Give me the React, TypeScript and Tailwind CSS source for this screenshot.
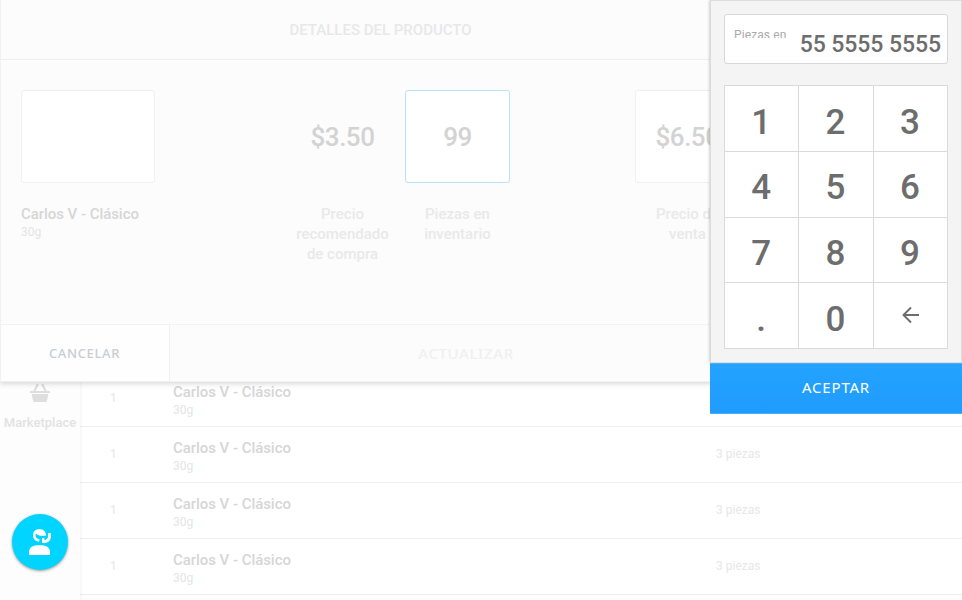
import React from 'react';

const rows = [
  { qty: '1', name: 'Carlos V - Clásico', size: '30g', stock: '3 piezas' },
  { qty: '1', name: 'Carlos V - Clásico', size: '30g', stock: '3 piezas' },
  { qty: '1', name: 'Carlos V - Clásico', size: '30g', stock: '3 piezas' },
  { qty: '1', name: 'Carlos V - Clásico', size: '30g', stock: '3 piezas' },
];

const keys = ['1', '2', '3', '4', '5', '6', '7', '8', '9', '.', '0', 'back'];

function Product({ name, size }: { name: string; size: string }) {
  return (
    <div className="whitespace-nowrap">
      <div className="text-[15px] leading-5 font-medium tracking-[-0.05px] text-[#d6d6d6]">{name}</div>
      <div className="text-xs leading-4 text-[#e4e4e4]">{size}</div>
    </div>
  );
}

function Sidebar() {
  return (
    <aside className="z-10 flex h-[600px] w-20 shrink-0 flex-col items-center bg-[#fdfdfd] pt-[384px] shadow-[0_0_4px_rgba(0,0,0,0.08)]">
      <svg width="20" height="19" viewBox="0 0 20 19" className="shrink-0">
        <path d="M4 8 7.800 0M16 8 12.200 0" stroke="#dedede" strokeWidth="2.2" fill="none" />
        <path d="M0 7h20v2H0z" fill="#dedede" />
        <path d="M1.600 10h16.800l-1.500 7q-.3 1-1.300 1H4.400q-1 0-1.300-1z" fill="#dedede" />
      </svg>
      <div className="mt-[10px] text-[13px] leading-5 font-medium tracking-[0.01px] text-[#e2e2e2]">Marketplace</div>
      <button className="mt-[81px] flex size-14 shrink-0 items-center justify-center rounded-full bg-[#00d4ff] shadow-[0_1px_3px_rgba(0,0,0,0.4)]">
        <svg width="24" height="28" viewBox="0 0 24 28">
          <path d="M1 27v-3C1 19 5 17.200 11.500 17.200S22 19 22 24v3z" fill="#fff" />
          <path d="M11.500 1C7.500 1 5 4 5 7.300c0 3.700 2.400 6.300 6.300 6.300v-2.600C9 10.800 7.500 9.300 7.500 7.400q0-1 .5-1.600C11 8 14.500 8.400 18.200 7.600 18 3.800 15.300 1 11.500 1z" fill="#fff" />
          <path d="M20.200 5H23v3c0 4.400-3 7-6.500 7H14v-4.800h2.400v2.200c2.400-.7 3.800-2.400 3.800-4.800z" fill="#fff" />
        </svg>
      </button>
    </aside>
  );
}

function Metric({ value, label, box }: { value: string; label: string; box: string }) {
  return (
    <div className="flex flex-col items-center">
      <div className={`flex h-[93px] items-center justify-center rounded-[3px] border pt-[2px] text-[26px] font-medium tracking-[-0.5px] text-[#d3d3d3] ${box}`}>{value}</div>
      <div className="mt-[21px] text-center text-[15px] leading-5 font-medium whitespace-pre-line text-[#e9e9e9]">{label}</div>
    </div>
  );
}

function ProductDialog() {
  return (
    <section className="absolute top-0 left-0 z-20 flex h-[382px] w-[763px] flex-col border-l border-[#f1f1f1] bg-[#fcfcfc] shadow-[0_2px_5px_rgba(0,0,0,0.15)]">
      <header className="flex h-[60px] shrink-0 items-center justify-center border-b border-[#efefef] pt-[2px] pr-[3px] text-[15px] font-medium text-[#e8e8e8]">
        DETALLES DEL PRODUCTO
      </header>
      <div className="flex h-[264px] shrink-0 items-start pt-[30px] pl-5">
        <div className="w-[264px]">
          <div className="mb-[21px] h-[93px] w-[134px] rounded-[3px] border border-[#f0f0f0] bg-white" />
          <Product name="Carlos V - Clásico" size="30g" />
        </div>
        <Metric value="$3.50" label={'Precio\nrecomendado\nde compra'} box="w-[115px] border-transparent" />
        <div className="ml-[5px]">
          <Metric value="99" label={'Piezas en\ninventario'} box="w-[105px] border-[#b9e0fc] bg-white" />
        </div>
        <div className="ml-[125px]">
          <Metric value="$6.50" label={'Precio de\nventa'} box="w-[105px] border-[#f0f0f0] bg-white" />
        </div>
      </div>
      <footer className="flex h-[58px] border-t border-[#f2f2f2] font-['Noto_Sans',sans-serif]">
        <button className="w-[169px] border-r border-b border-[#f0f0f0] bg-[#fefefe] pt-px pr-px text-[13px] font-medium tracking-[0.65px] text-[#c9cdd2]">CANCELAR</button>
        <button className="flex-1 border-b border-[#f2f2f2] pr-px text-[15px] font-medium tracking-[0.6px] text-[#f0f0f0]">ACTUALIZAR</button>
      </footer>
    </section>
  );
}

function Keypad() {
  return (
    <section className="absolute top-0 left-[710px] z-30 w-[252px] bg-[#f4f4f4]">
      <div className="h-[363px] border border-[#dcdcdc] px-[13px] pt-[13px] shadow-[0_0_3px_rgba(0,0,0,0.3)]">
        <div className="flex h-[50px] items-start justify-between rounded-[3px] border border-[#d8d8d8] bg-white pr-[6px] pl-[9px]">
          <div className="mt-[14px] h-[9px] overflow-hidden text-xs leading-[13px] tracking-[0.1px] text-[#aaa]">Piezas en</div>
          <div className="mt-[16px] text-[23px] leading-7 font-medium tracking-[-0.07px] whitespace-nowrap text-[#6d6d6d]">55 5555 5555</div>
        </div>
        <div className="mt-[21px] grid h-[264px] grid-cols-3 grid-rows-4 gap-px border border-[#dadada] bg-[#dadada]">
          {keys.map((key) => (
            <button key={key} className="flex items-center justify-center bg-white pt-[9px] pr-px text-[35px] font-medium text-[#6d6d6d]">
              {key === 'back' ? (
                <svg width="18" height="18" viewBox="0 0 18 18" className="mb-[10px] ml-[3px]" fill="none" stroke="#6d6d6d" strokeWidth="1.9">
                  <path d="M17 9H2M9 1.500 1.500 9 9 16.500" />
                </svg>
              ) : key}
            </button>
          ))}
        </div>
      </div>
      <button className="relative block h-[51px] w-full border-y border-[#48b0ff] bg-linear-to-b from-[#23a3ff] to-[#209bff] pb-[2px] font-['Noto_Sans',sans-serif] text-[15px] tracking-[0.8px] text-white">
        ACEPTAR
      </button>
    </section>
  );
}

export default function App() {
  return (
    <div className="relative flex h-[600px] w-[962px] overflow-hidden bg-white font-[Roboto,sans-serif]">
      <Sidebar />
      <main className="flex-1 pt-[371px]">
        {rows.map((row, index) => (
          <div key={index} className="flex h-14 items-center border-b border-[#eee]">
            <div className="w-[93px] pb-[2px] pl-[30px] text-xs text-[#e7e7e7]">{row.qty}</div>
            <div className="w-[543px] pt-[2px]"><Product name={row.name} size={row.size} /></div>
            <div className="pb-[2px] text-xs text-[#e7e7e7]">{row.stock}</div>
          </div>
        ))}
        <div className="h-2 bg-[#fdfdfd]" />
      </main>
      <ProductDialog />
      <Keypad />
    </div>
  );
}
